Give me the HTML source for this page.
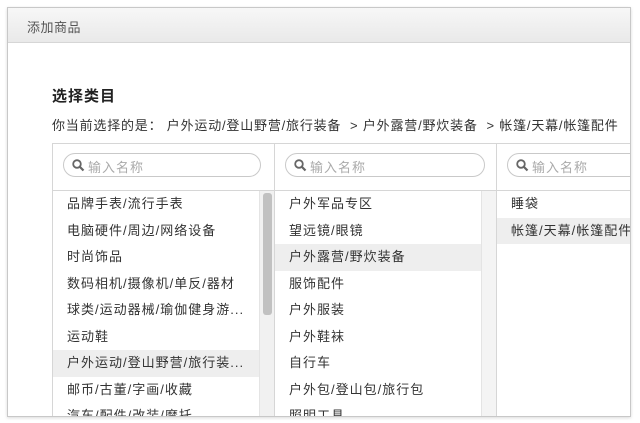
<!DOCTYPE html>
<html><head><meta charset="utf-8"><style>
*{margin:0;padding:0;box-sizing:border-box}
body{width:640px;height:423px;background:#fff;font-family:"Liberation Sans","Noto Sans CJK SC",sans-serif;position:relative;overflow:hidden;color:#333}
.dlg{position:absolute;left:7px;top:7px;width:624px;height:410px;border:1px solid #c8c8c8;overflow:hidden;background:#fff;box-shadow:0 1px 3px rgba(0,0,0,.15)}
.hd{height:35px;background:linear-gradient(#f7f7f7,#e9e9e9);border-bottom:1px solid #d6d6d6;font-size:13px;color:#555;padding:9px 0 0 19px;letter-spacing:.5px}
.t{position:absolute;left:44px;top:77px;font-size:15px;font-weight:bold;color:#222;letter-spacing:1px}
.bc{position:absolute;left:44px;top:107px;font-size:13px;color:#333;white-space:nowrap;letter-spacing:.8px}
.tbl{position:absolute;left:44px;top:135px;width:600px;height:300px;border:1px solid #d6d6d6}
.col{position:absolute;top:0;height:300px;border-right:1px solid #d6d6d6}
.sr{height:47px;border-bottom:1px solid #d6d6d6;padding:9px 0 0 10px}
.in{height:24px;border:1px solid #c9c9c9;border-radius:12px;font-size:13px;color:#aaa;padding:3px 0 0 24px;position:relative;letter-spacing:1px}
.in svg{position:absolute;left:8px;top:5px}
.it{height:26.5px;line-height:26.5px;font-size:13px;padding-left:14px;white-space:nowrap;color:#333;letter-spacing:1px}
.hl{background:#eee}
.sb{position:absolute;top:47px;width:15px;height:260px;background:#f1f1f1;border-left:1px solid #e4e4e4}
.th{position:absolute;left:3px;top:2px;width:9px;height:122px;background:#c1c1c1;border-radius:3px}
</style></head><body>
<div class="dlg">
<div class="hd">添加商品</div>
<div class="t">选择类目</div>
<div class="bc">你当前选择的是： 户外运动/登山野营/旅行装备 &nbsp;&gt; 户外露营/野炊装备 &nbsp;&gt; 帐篷/天幕/帐篷配件</div>
<div class="tbl">
<div class="col" style="left:0;width:222px">
<div class="sr"><div class="in" style="width:198px"><svg width="13" height="13" viewBox="0 0 13 13"><circle cx="5" cy="5" r="3.8" fill="none" stroke="#666" stroke-width="1.8"/><path d="M8 8l3.5 3.5" stroke="#666" stroke-width="2.2"/></svg>输入名称</div></div>
<div class="it">品牌手表/流行手表</div><div class="it">电脑硬件/周边/网络设备</div><div class="it">时尚饰品</div><div class="it">数码相机/摄像机/单反/器材</div><div class="it">球类/运动器械/瑜伽健身游...</div><div class="it">运动鞋</div><div class="it hl" style="margin-right:15px">户外运动/登山野营/旅行装...</div><div class="it">邮币/古董/字画/收藏</div><div class="it">汽车/配件/改装/摩托</div>
<div class="sb" style="left:206px"><div class="th"></div></div>
</div>
<div class="col" style="left:222px;width:222px">
<div class="sr"><div class="in" style="width:200px"><svg width="13" height="13" viewBox="0 0 13 13"><circle cx="5" cy="5" r="3.8" fill="none" stroke="#666" stroke-width="1.8"/><path d="M8 8l3.5 3.5" stroke="#666" stroke-width="2.2"/></svg>输入名称</div></div>
<div class="it">户外军品专区</div><div class="it">望远镜/眼镜</div><div class="it hl" style="margin-right:15px">户外露营/野炊装备</div><div class="it">服饰配件</div><div class="it">户外服装</div><div class="it">户外鞋袜</div><div class="it">自行车</div><div class="it">户外包/登山包/旅行包</div><div class="it">照明工具</div>
<div class="sb" style="left:206px;background:#f4f4f4"></div>
</div>
<div class="col" style="left:444px;width:200px;border-right:0">
<div class="sr"><div class="in" style="width:200px"><svg width="13" height="13" viewBox="0 0 13 13"><circle cx="5" cy="5" r="3.8" fill="none" stroke="#666" stroke-width="1.8"/><path d="M8 8l3.5 3.5" stroke="#666" stroke-width="2.2"/></svg>输入名称</div></div>
<div class="it">睡袋</div><div class="it hl">帐篷/天幕/帐篷配件</div>
</div>
</div>
</div>
</body></html>
